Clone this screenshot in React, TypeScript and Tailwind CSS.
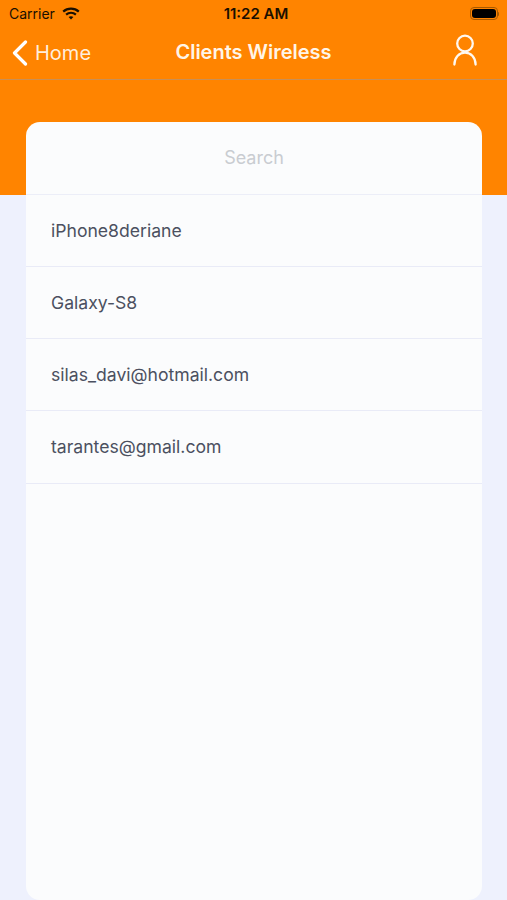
import React from 'react';

const clients = ['iPhone8deriane', 'Galaxy-S8', 'silas_davi@hotmail.com', 'tarantes@gmail.com'];

const WifiIcon = () => (
  <svg width="18" height="13" viewBox="0 0 18 13" fill="none" stroke="#1a0f00" strokeLinecap="butt">
    <path d="M1.2 4.6C5.6 0.6 12.4 0.6 16.8 4.6" strokeWidth="2.2" />
    <path d="M4.1 7.6C6.9 5.1 11.1 5.1 13.9 7.6" strokeWidth="2.2" />
    <path d="M9 12.6L6.6 10.1C8 8.9 10 8.9 11.4 10.1Z" fill="#1a0f00" stroke="none" />
  </svg>
);

const BatteryIcon = () => (
  <div className="flex items-center">
    <div className="w-[28px] h-[13px] rounded-[4px] border border-[#a85a00] p-[1px]">
      <div className="w-full h-full rounded-[3px] bg-black" />
    </div>
    <div className="w-[1.5px] h-[4px] bg-[#a85a00] rounded-r-sm" />
  </div>
);

const UserIcon = () => (
  <svg width="24" height="32" viewBox="0 0 24 32" fill="none" stroke="#fff8f0" strokeWidth="2.3" strokeLinecap="round">
    <circle cx="12" cy="9.5" r="7.8" />
    <path d="M1.4 30.5C1.4 23.5 6 18.6 12 18.6C18 18.6 22.6 23.5 22.6 30.5" />
  </svg>
);

export default function App() {
  return (
    <div className="h-[900px] overflow-hidden bg-[#eef1fd] font-['Inter','Liberation_Sans',sans-serif]">
      {/* orange header */}
      <div className="h-[195px] bg-[#ff8400]">
        <div className="h-[27px] pl-[9px] pr-[8px] flex items-center justify-between text-[14px] text-[#1a0f00]">
          <div className="flex-1 flex items-center gap-[7px]">
            <span className="leading-none">Carrier</span>
            <WifiIcon />
          </div>
          <span className="ml-[4px] text-[15px] font-semibold leading-none">11:22 AM</span>
          <div className="flex-1 flex justify-end">
            <BatteryIcon />
          </div>
        </div>
        <div className="h-[53px] border-b border-[#c98f55] pl-[12px] pr-[30px] flex items-center justify-between text-white">
          <div className="flex-1 flex items-center gap-[7px]">
            <svg width="16" height="26" viewBox="0 0 16 26" fill="none" stroke="white" strokeWidth="3.2" strokeLinecap="round" strokeLinejoin="round">
              <path d="M13.5 2L2.5 13L13.5 24" />
            </svg>
            <span className="text-[20px] text-[#ffeedd]">Home</span>
          </div>
          <span className="ml-[18px] -mt-[2px] text-[20px] font-semibold text-[#fff5e8]">Clients Wireless</span>
          <div className="flex-1 flex justify-end -mt-[6px]">
            <UserIcon />
          </div>
        </div>
      </div>

      {/* card */}
      <div className="ml-[26px] mr-[25px] -mt-[73px] relative h-[778px] rounded-[14px] bg-[#fbfcfd]">
        <div className="h-[73px] pb-[2px] border-b border-[#eceef8] flex items-center justify-center text-[18px] text-[#c9ccd1]">
          Search
        </div>
        {clients.map((name, i) => (
          <div key={name} className={`${i === 3 ? 'h-[73px]' : 'h-[72px]'} border-b border-[#e9ebf7] pl-[25px] pt-[1px] flex items-center text-[17.6px] text-[#4b5060]`}>
            {name}
          </div>
        ))}
      </div>
    </div>
  );
}
